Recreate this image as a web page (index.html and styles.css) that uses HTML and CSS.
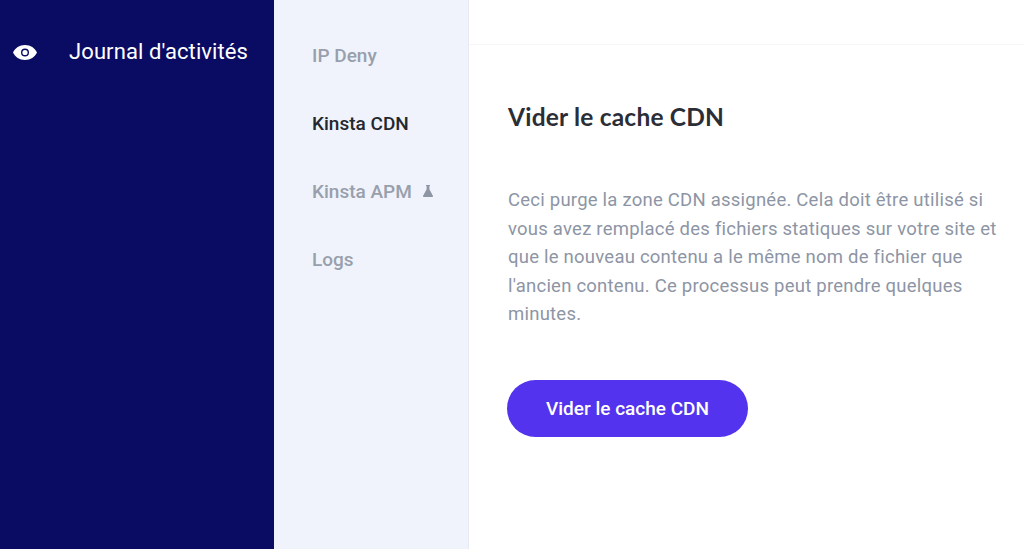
FILE: index.html
```html
<html>
<head>
<meta charset="utf-8">
<link rel="stylesheet" href="styles.css">
</head>
<body>
<div class="sidebar">
  <div class="sideitem">
    <svg class="eye" viewBox="0 0 24 15">
      <path fill="#fff" fill-rule="evenodd" d="M12 0C6.500 0 2 3 0 7.500 2 12 6.500 15 12 15s10-3 12-7.500C22 3 17.500 0 12 0zM12 11.500a4 4 0 1 1 0-8 4 4 0 0 1 0 8z"/>
      <circle fill="#fff" cx="12" cy="7.500" r="2.600"/>
    </svg>
    <span>Journal d'activités</span>
  </div>
</div>
<div class="submenu">
  <div class="subitem">IP Deny</div>
  <div class="subitem active">Kinsta CDN</div>
  <div class="subitem">Kinsta APM
    <svg class="flask" viewBox="0 0 10 12">
      <path fill="#8e95a5" d="M3 0h4v1h-.6v3.200L10 11c.2.500-.1 1-.6 1H.6c-.5 0-.8-.5-.6-1l3.600-6.800V1H3z"/>
    </svg>
  </div>
  <div class="subitem">Logs</div>
</div>
<div class="main">
  <div class="topbar"></div>
  <div class="content">
    <h1>Vider le cache CDN</h1>
    <p>Ceci purge la zone CDN assignée. Cela doit être utilisé si vous avez remplacé des fichiers statiques sur votre site et que le nouveau contenu a le même nom de fichier que l'ancien contenu. Ce processus peut prendre quelques minutes.</p>
    <button class="button">Vider le cache CDN</button>
  </div>
</div>
</body>
</html>
```

FILE: styles.css
```css
html, body {
  height: 100%;
}
body {
  margin: 0;
  display: flex;
  overflow: hidden;
  background: #fff;
  font-family: Roboto, sans-serif;
}
.sidebar {
  width: 274px;
  flex-shrink: 0;
  background: #0a0c64;
  color: #fff;
}
.sideitem {
  display: flex;
  align-items: center;
  padding: 39px 0 0 13px;
  font-size: 22px;
  line-height: 26px;
  letter-spacing: .1px;
}
.eye {
  width: 24px;
  height: 15px;
  margin-right: 32px;
}
.submenu {
  width: 195px;
  flex-shrink: 0;
  padding-top: 41.500px;
  box-sizing: border-box;
  background: #f0f3fb;
  border-right: 1px solid #e9e9f3;
}
.subitem {
  display: flex;
  align-items: center;
  height: 28px;
  margin-bottom: 40px;
  padding-left: 38px;
  font-size: 19px;
  font-weight: 500;
  color: #989fad;
}
.active {
  color: #23272f;
}
.flask {
  width: 10px;
  height: 12px;
  margin: -2px 0 0 11px;
}
.main {
  flex: 1;
}
.topbar {
  height: 44px;
  border-bottom: 1px solid #f6f6f9;
}
.content {
  padding: 57px 20px 0 39px;
}
h1 {
  margin: 0;
  font-family: Lato, sans-serif;
  font-size: 24.500px;
  line-height: 30px;
  font-weight: 700;
  letter-spacing: .2px;
  color: #2b2e36;
}
p {
  margin: 54px 0 0;
  font-size: 18.500px;
  line-height: 28.500px;
  letter-spacing: .23px;
  color: #8d95a5;
}
.button {
  display: block;
  width: 241px;
  height: 57px;
  margin: 51px 0 0 -1px;
  border: 0;
  border-radius: 29px;
  background: #5333ed;
  color: #fff;
  font-family: Roboto, sans-serif;
  font-size: 19px;
  font-weight: 500;
}
```
